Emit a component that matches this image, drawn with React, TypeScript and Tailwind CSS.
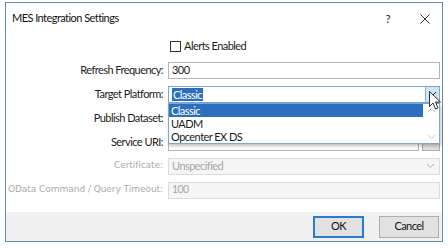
import React from "react";

function Chevron({ className = "" }: { className?: string }) {
  return (
    <svg width="9" height="6" viewBox="0 0 9 6" className={className}>
      <path d="M1 1 L4.5 4.5 L8 1" fill="none" stroke="currentColor" strokeWidth="1" />
    </svg>
  );
}

function Row({ label, disabled = false, children }: { label: string; disabled?: boolean; children: React.ReactNode }) {
  return (
    <div className="h-[24px] flex items-center gap-[5px] pr-[2px]">
      <div
        className={
          disabled
            ? "w-[157px] shrink-0 flex justify-end whitespace-nowrap text-[9.1px] text-[#ababab] font-['DejaVu_Sans',sans-serif] tracking-[-0.1px]"
            : "w-[157px] shrink-0 flex justify-end whitespace-nowrap text-[11px] text-[#1b1b1b]"
        }
      >
        {label}
      </div>
      <div className="flex-1 relative h-[17px]">{children}</div>
    </div>
  );
}

export default function App() {
  return (
    <div className="w-[448px] h-[248px] bg-white relative overflow-hidden font-['Lato',sans-serif] tracking-[-0.55px]">
      <div className="ml-[5px] mt-[2px] w-[438px] h-[240px] border border-[#628fa6] bg-white flex flex-col">
        {/* title bar */}
        <div className="h-[31px] flex items-center pl-[6px] pr-[12px] shrink-0">
          <div className="text-[11px] text-[#111] flex-1">MES Integration Settings</div>
          <div className="text-[11.5px] text-[#222] mr-[30px]">?</div>
          <svg width="10" height="10" viewBox="0 0 10 10">
            <path d="M0.5 0.5 L9.5 9.5 M9.5 0.5 L0.5 9.5" stroke="#333" strokeWidth="1" />
          </svg>
        </div>
        {/* checkbox row */}
        <div className="h-[24px] flex items-center pl-[164px] gap-[3px] shrink-0">
          <div className="w-[11px] h-[11px] border border-[#333] bg-white" />
          <div className="text-[11px] text-[#1b1b1b]">Alerts Enabled</div>
        </div>
        <Row label="Refresh Frequency:">
          <div className="h-full border border-[#b4b4b4] flex items-center px-[3px] text-[11px] text-[#1b1b1b]">300</div>
        </Row>
        <div className="relative z-10">
          <Row label="Target Platform:">
            <div className="h-full border border-[#7fa6d2] flex items-center pl-[3px] text-[11px]">
              <span className="bg-[#2a70be] text-white px-[1px] leading-[13px]">Classic</span>
              <div className="ml-auto w-[14px] h-full bg-[#cde5f7] border-l border-[#7eb4ea] flex items-center justify-center text-[#222]">
                <Chevron />
              </div>
            </div>
            {/* dropdown list */}
            <div className="absolute left-0 right-0 top-[17px] h-[41px] bg-white border border-[#7fa6d2] shadow-[1px_2px_3px_rgba(0,0,0,0.25)] flex">
              <div className="flex-1 flex flex-col text-[11px] text-[#1b1b1b]">
                <div className="h-[13px] leading-[13px] bg-[#2a70be] text-white px-[2px]">Classic</div>
                <div className="h-[13px] leading-[13px] px-[2px]">UADM</div>
                <div className="h-[13px] leading-[13px] px-[2px]">Opcenter EX DS</div>
              </div>
              <div className="w-[16px] flex flex-col items-center justify-between py-[3px] text-[#c4c4c4] bg-white">
                <Chevron className="rotate-180" />
                <Chevron />
              </div>
            </div>
            {/* cursor */}
            <svg className="absolute left-[261px] top-[5px]" width="13" height="20" viewBox="0 0 13 20">
              <path d="M0.5 0.5 L0.5 15.5 L4 12 L6.5 18 L9 17 L6.5 11 L11.5 11 Z" fill="#fff" stroke="#333" strokeWidth="1" />
            </svg>
          </Row>
        </div>
        <Row label="Publish Dataset:">
          <div className="h-full border border-[#b4b4b4]" />
        </Row>
        <Row label="Service URI:">
          <div className="h-full flex gap-[3px]">
            <div className="flex-1 border border-[#b4b4b4]" />
            <div className="w-[18px] border border-[#adadad] bg-[#e1e1e1] flex items-center justify-center text-[9px] text-[#333] leading-none pb-[3px] tracking-normal">...</div>
          </div>
        </Row>
        <Row label="Certificate:" disabled>
          <div className="h-full border border-[#dcdcdc] bg-[#f5f5f5] flex items-center px-[3px] text-[11px] text-[#a6a6a6]">
            Unspecified
            <Chevron className="ml-auto mr-[1px] text-[#b0b0b0]" />
          </div>
        </Row>
        <Row label="OData Command / Query Timeout:" disabled>
          <div className="h-full border border-[#dcdcdc] bg-[#f5f5f5] flex items-center px-[3px] text-[10.5px] text-[#a6a6a6]">100</div>
        </Row>
        <div className="flex-1" />
        {/* footer */}
        <div className="h-[29px] bg-[#f0f0f0] flex items-center justify-end gap-[15px] pr-[3px] shrink-0">
          <div className="w-[51px] h-[22px] border-2 border-[#2a7bd0] bg-[#e1e1e1] flex items-center justify-center text-[11px] text-[#111]">OK</div>
          <div className="w-[60px] h-[22px] border border-[#adadad] bg-[#e1e1e1] flex items-center justify-center text-[11px] text-[#111]">Cancel</div>
        </div>
      </div>
    </div>
  );
}
